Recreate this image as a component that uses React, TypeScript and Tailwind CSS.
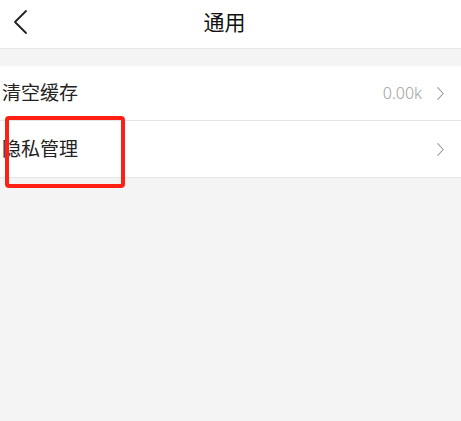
import React from 'react';

function Chevron({ className }: { className?: string }) {
  return (
    <svg viewBox="0 0 10 16" className={className} fill="none" stroke="currentColor" strokeWidth="1.2" strokeLinecap="round" strokeLinejoin="round">
      <path d="M2 1.5 L8 8 L2 14.5" />
    </svg>
  );
}

export default function App() {
  const font = { fontFamily: '"Noto Sans", "Noto Sans CJK SC", sans-serif' };

  return (
    <div className="relative w-[461px] h-[421px] bg-[#f4f4f4] overflow-hidden" style={font}>
      {/* Header */}
      <div className="relative h-[49px] bg-white border-b border-[#e8e8e8] flex items-center justify-center">
        <button className="absolute left-[12px] top-[9px] text-[#222]">
          <svg viewBox="0 0 16 26" className="w-[16px] h-[26px]" fill="none" stroke="currentColor" strokeWidth="1.8" strokeLinecap="round" strokeLinejoin="round">
            <path d="M14 2 L3 13 L14 24" />
          </svg>
        </button>
        <h1 className="text-[21px] text-[#111] leading-none -mt-[4px] -ml-[12px]">通用</h1>
      </div>

      {/* List */}
      <div className="mt-[17px] bg-white">
        <div className="h-[55px] flex items-center pl-[2px] pr-[16px] border-b border-[#e6e6e6]">
          <span className="text-[19px] text-[#222] leading-none">清空缓存</span>
          <span className="ml-auto text-[16px] text-[#a0a0a0] font-light leading-none">0.00k</span>
          <Chevron className="ml-[14px] w-[9px] h-[15px] text-[#9a9a9a]" />
        </div>
        <div className="h-[57px] flex items-center pl-[2px] pr-[16px] border-b border-[#e6e6e6]">
          <span className="text-[19px] text-[#222] leading-none">隐私管理</span>
          <Chevron className="ml-auto w-[9px] h-[15px] text-[#9a9a9a]" />
        </div>
      </div>

      {/* Annotation box */}
      <div className="absolute left-[5px] top-[116px] w-[120px] h-[72px] border-[4px] border-[#ff2015] rounded-[4px]" />
    </div>
  );
}
